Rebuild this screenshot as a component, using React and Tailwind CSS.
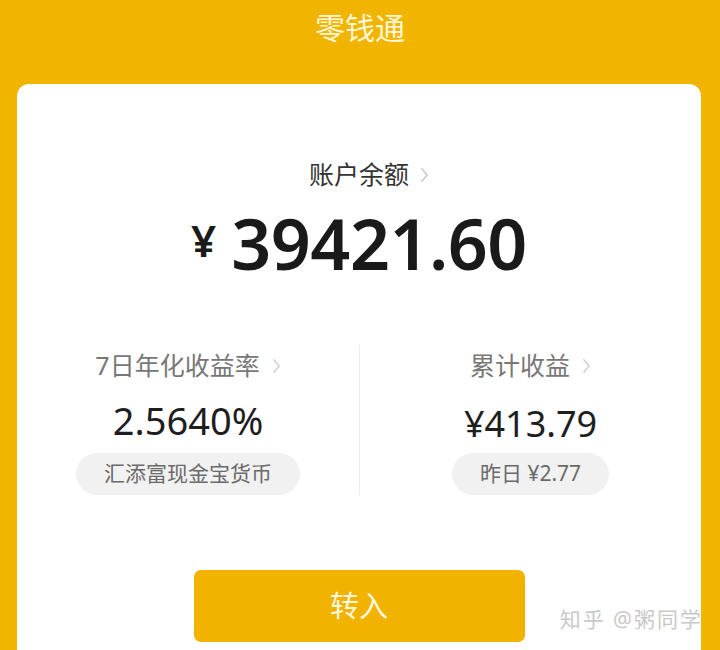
const cjk = "font-['Noto_Sans','Noto_Sans_CJK_SC',sans-serif]";

function Chevron({ className = '' }) {
  return (
    <svg viewBox="0 0 10 18" className={className} fill="none" stroke="currentColor" strokeWidth="1.4" strokeLinecap="round" strokeLinejoin="round">
      <path d="M2 2l6 7-6 7" />
    </svg>
  );
}

function Stat({ label, value, pill, valueClass }) {
  return (
    <div className="flex flex-col items-center">
      <div className="flex items-center h-[32px] text-[25px] text-[#777]">
        <span>{label}</span>
        <Chevron className="w-[9px] h-[16px] ml-[12px] text-[#cccccc]" />
      </div>
      <div className={`mt-[16px] h-[44px] flex items-center text-[#1e1e1e] ${valueClass}`}>{value}</div>
      <div className="mt-[11px] h-[42px] px-[28px] rounded-full bg-[#f1f1f1] flex items-center text-[21px] text-[#6a6a6a]">
        {pill}
      </div>
    </div>
  );
}

export default function App() {
  return (
    <div className={`relative w-[720px] h-[650px] overflow-hidden bg-[#f1b500] ${cjk}`}>
      <header className="h-[84px] flex justify-center pt-[9px]">
        <h1 className="text-[30px] leading-[38px] text-[#fff6d6]">零钱通</h1>
      </header>

      <main className="mx-[17px] w-[684px] h-[600px] bg-white rounded-[12px] flex flex-col items-center pt-[75px]">
        <div className="relative flex items-center h-[32px] text-[25px] text-[#333]">
          <span>账户余额</span>
          <Chevron className="absolute left-full ml-[11px] w-[9px] h-[16px] text-[#c2c2c2]" />
        </div>

        <div className="mt-[12px] h-[80px] flex items-center text-[#1a1a1a] font-semibold">
          <span className="text-[44px] mr-[15px] mt-[-6px]">¥</span>
          <span className="text-[70px] tracking-[-0.5px]">39421.60</span>
        </div>

        <section className="mt-[62px] w-full grid grid-cols-2">
          <div className="pt-[5px]">
            <Stat label="7日年化收益率" value="2.5640%" pill="汇添富现金宝货币" valueClass="text-[38px]" />
          </div>
          <div className="pt-[5px] border-l border-[#ececec]">
            <Stat
              label="累计收益"
              value="¥413.79"
              pill="昨日 ¥2.77"
              valueClass="text-[36px] pt-[8px]"
            />
          </div>
        </section>

        <button className="mt-[75px] w-[331px] h-[72px] rounded-[7px] bg-[#f1b300] text-[29px] text-[#fff8e0] flex items-center justify-center">
          转入
        </button>
      </main>

      <div className="absolute right-[17px] top-[604px] text-[21px] text-[#c9c9c9] tracking-[2px]">
        知乎 @粥同学
      </div>
    </div>
  );
}
